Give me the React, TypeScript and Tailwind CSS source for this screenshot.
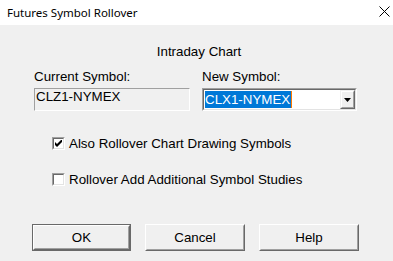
import React from "react"

const Check = ({ checked }: { checked?: boolean }) => (
    <div className="w-[13px] h-[13px] border border-t-[#a0a0a0] border-l-[#a0a0a0] border-b-white border-r-white">
        <div className="w-full h-full bg-white border border-t-[#696969] border-l-[#696969] border-b-[#e3e3e3] border-r-[#e3e3e3] flex items-center justify-center">
            {checked && (
                <svg width="7" height="7" viewBox="0 0 7 7">
                    <path d="M0 2 L0 5 L2 7 L7 2 L7 -1 L2 4 Z" fill="#000" />
                </svg>
            )}
        </div>
    </div>
)

const Btn = ({ label, def }: { label: string; def?: boolean }) => (
    <div className={def ? "w-[99px] h-[27px] border border-[#696969]" : "w-[100px] h-[27px]"}>
        <div className="w-full h-full border border-t-white border-l-white border-b-[#696969] border-r-[#696969]">
            <div className="w-full h-full border border-t-[#f0f0f0] border-l-[#f0f0f0] border-b-[#a0a0a0] border-r-[#a0a0a0] bg-[#f0f0f0] flex items-center justify-center">
                {label}
            </div>
        </div>
    </div>
)

export default function App() {
    return (
        <div className="w-[393px] h-[261px] bg-[#f0f0f0] text-black text-[13.33px] leading-[15px] font-['Liberation_Sans',Arial,sans-serif]">
            <header className="h-[25px] bg-white flex items-center justify-between pl-[7px] pr-[3px]">
                <span className="font-['Noto_Sans',sans-serif] text-[11.5px] pb-[1px]">Futures Symbol Rollover</span>
                <svg width="11" height="11" viewBox="0 0 11 11" className="mb-[2px]">
                    <path d="M0.5 0.5 L10.5 10.5 M10.5 0.5 L0.5 10.5" stroke="#000" strokeWidth="1" />
                </svg>
            </header>

            <div className="pt-[19px] pl-[5px] text-center">Intraday Chart</div>

            <div className="flex gap-x-[12px] pl-[34px] mt-[10px]">
                <div className="w-[156px]">
                    <div>Current Symbol:</div>
                    <div className="mt-[4px] h-[23px] border border-t-[#a0a0a0] border-l-[#a0a0a0] border-b-white border-r-white pl-[1px]">
                        CLZ1-NYMEX
                    </div>
                </div>
                <div className="w-[155px]">
                    <div>New Symbol:</div>
                    <div className="mt-[4px] h-[23px] border border-t-[#a0a0a0] border-l-[#a0a0a0] border-b-white border-r-white">
                        <div className="h-full bg-white border border-t-[#696969] border-l-[#696969] border-b-[#e3e3e3] border-r-[#e3e3e3] flex items-stretch">
                            <div className="flex-1 flex items-center pl-[1px]">
                                <span className="bg-[#0078d7] text-white h-[17px] leading-[17px] pr-[1px] border-r border-[#ff7a00]">
                                    CLX1-NYMEX
                                </span>
                            </div>
                            <div className="w-[15px] border border-t-[#f0f0f0] border-l-[#f0f0f0] border-b-[#696969] border-r-[#696969]">
                                <div className="w-full h-full bg-[#f0f0f0] border border-t-white border-l-white border-b-[#a0a0a0] border-r-[#a0a0a0] flex items-center justify-center">
                                    <svg width="7" height="4" viewBox="0 0 7 4">
                                        <path d="M0 0 L7 0 L3.5 4 Z" fill="#000" />
                                    </svg>
                                </div>
                            </div>
                        </div>
                    </div>
                </div>
            </div>

            <div className="pl-[52px] mt-[25px] flex flex-col gap-y-[21px]">
                <div className="flex items-center gap-x-[4px]">
                    <Check checked />
                    <span>Also Rollover Chart Drawing Symbols</span>
                </div>
                <div className="flex items-center gap-x-[4px]">
                    <Check />
                    <span>Rollover Add Additional Symbol Studies</span>
                </div>
            </div>

            <div className="flex pl-[32px] gap-x-[14px] mt-[37px]">
                <Btn label="OK" def />
                <Btn label="Cancel" />
                <Btn label="Help" />
            </div>
        </div>
    )
}
